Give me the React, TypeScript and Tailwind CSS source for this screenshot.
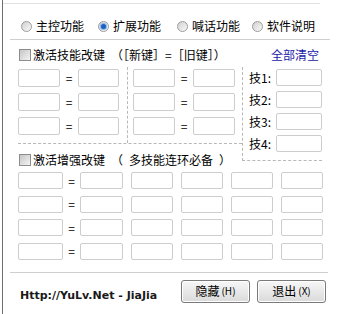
import React from "react";

const Radio = ({ checked }: { checked?: boolean }) => (
  <span className="flex items-center justify-center w-[11px] h-[11px] rounded-full border border-[#9c9c9c] bg-linear-to-br from-[#cfcfcf] to-[#fbfbfb] shrink-0">
    {checked && (
      <span className="w-[5px] h-[5px] rounded-full bg-[#1d5fc2] shadow-[0_0_0_1px_#8ab8ee]" />
    )}
  </span>
);

const Check = () => (
  <span className="w-[12px] h-[12px] border border-[#8d8d8d] bg-linear-to-br from-[#c6c6c6] to-[#f4f4f4] shrink-0" />
);

const Box = ({ w, h = 18 }: { w: string; h?: number }) => (
  <input
    type="text"
    className={`${w} ${h === 18 ? "h-[18px]" : "h-[17px]"} border border-[#cdcdcd] rounded-[2px] bg-white outline-none`}
  />
);

const Eq = ({ w }: { w: string }) => <span className={`${w} text-center leading-[16px]`}>=</span>;

export default function App() {
  const radios = [
    { label: "主控功能", w: "w-[77px]", checked: false },
    { label: "扩展功能", w: "w-[79px]", checked: true },
    { label: "喊话功能", w: "w-[75px]", checked: false },
    { label: "软件说明", w: "w-[70px]", checked: false },
  ];
  return (
    <div className="w-[338px] h-[314px] bg-white flex overflow-hidden text-black font-['Noto_Sans_CJK_SC',sans-serif] text-[12px] leading-[16px]">
      <div className="ml-[2px] w-px h-full bg-[#6e6e6e] shrink-0" />
      <div className="flex-1 flex flex-col">
        <div className="mt-[3px] h-px w-[317px] bg-[#e2e2e2]" />

        {/* radio row */}
        <div className="mt-[14px] h-[16px] flex items-center pl-[18px]">
          {radios.map((r) => (
            <div key={r.label} className={`${r.w} flex items-center gap-[4px] shrink-0`}>
              <Radio checked={r.checked} />
              <span>{r.label}</span>
            </div>
          ))}
        </div>

        <div className="mt-[5px] ml-[7px] w-[320px] h-px bg-[#cfcfcf]" />

        {/* checkbox 1 row */}
        <div className="mt-[7px] h-[16px] flex items-center pl-[16px] pr-[19px]">
          <Check />
          <span className="ml-[2px]">激活技能改键&#8194;（［新键］=［旧键］）</span>
          <span className="ml-auto text-[#1a22a8]">全部清空</span>
        </div>

        {/* top section */}
        <div className="mt-[4px] ml-[15px] flex">
          <div className="w-[224px] flex flex-col shrink-0">
            <div className="h-[77px] flex border-b border-dashed border-[#b8b8b8]">
              <div className="w-[110px] border-r border-dashed border-[#b8b8b8] pt-[2px] flex flex-col gap-[6px]">
                {[0, 1, 2].map((i) => (
                  <div key={i} className="flex items-center">
                    <Box w="w-[42px]" />
                    <Eq w="w-[18px]" />
                    <Box w="w-[41px]" />
                  </div>
                ))}
              </div>
              <div className="pl-[5px] pt-[2px] flex flex-col gap-[6px]">
                {[0, 1, 2].map((i) => (
                  <div key={i} className="flex items-center">
                    <Box w="w-[42px]" />
                    <Eq w="w-[18px]" />
                    <Box w="w-[42px]" />
                  </div>
                ))}
              </div>
            </div>
            <div className="mt-[8px] h-[16px] flex items-center pl-[1px]">
              <Check />
              <span className="ml-[2px]">激活增强改键&#8194;（&#8194;多技能连环必备&#8194;）</span>
            </div>
          </div>
          <div className="w-[80px] self-start border-l border-b border-dashed border-[#b8b8b8] pt-[2px] pb-[8px] pl-[6px] flex flex-col gap-[5px] shrink-0">
            {[1, 2, 3, 4].map((n) => (
              <div key={n} className="flex items-center">
                <span className="w-[27px]">技{n}:</span>
                <Box w="w-[46px]" h={17} />
              </div>
            ))}
          </div>
        </div>

        {/* lower grid */}
        <div className="mt-[4px] ml-[15px] flex flex-col gap-[6.67px]">
          {[0, 1, 2, 3].map((i) => (
            <div key={i} className="flex items-center">
              <Box w="w-[45px]" h={17} />
              <Eq w="w-[17px]" />
              <Box w="w-[43px]" h={17} />
              <div className="ml-[8px] flex gap-[8px]">
                <Box w="w-[42px]" h={17} />
                <Box w="w-[42px]" h={17} />
                <Box w="w-[42px]" h={17} />
                <Box w="w-[42px]" h={17} />
              </div>
            </div>
          ))}
        </div>

        <div className="mt-[12px] ml-[7px] w-[318px] h-px bg-[#cfcfcf]" />

        {/* footer */}
        <div className="mt-[7px] flex items-start pl-[17px] pr-[12px]">
          <span className="mt-[9px] font-['DejaVu_Sans',sans-serif] font-bold text-[11px] leading-[13px] text-[#1a1a1a]">
            Http://YuLv.Net - JiaJia
          </span>
          <div className="ml-auto flex gap-[7px]">
            <button className="w-[69px] h-[23px] border border-[#7a7a7a] rounded-[3px] bg-linear-to-b from-[#f7f7f7] to-[#dadada] shadow-[inset_0_0_0_1px_#ffffff] flex items-center justify-center text-[12px] leading-[16px]">
              隐藏<span className="text-[10px] ml-[2px]">(H)</span>
            </button>
            <button className="w-[69px] h-[23px] border border-[#7a7a7a] rounded-[3px] bg-linear-to-b from-[#f7f7f7] to-[#dadada] shadow-[inset_0_0_0_1px_#ffffff] flex items-center justify-center text-[12px] leading-[16px]">
              退出<span className="text-[10px] ml-[2px]">(X)</span>
            </button>
          </div>
        </div>
      </div>
    </div>
  );
}
